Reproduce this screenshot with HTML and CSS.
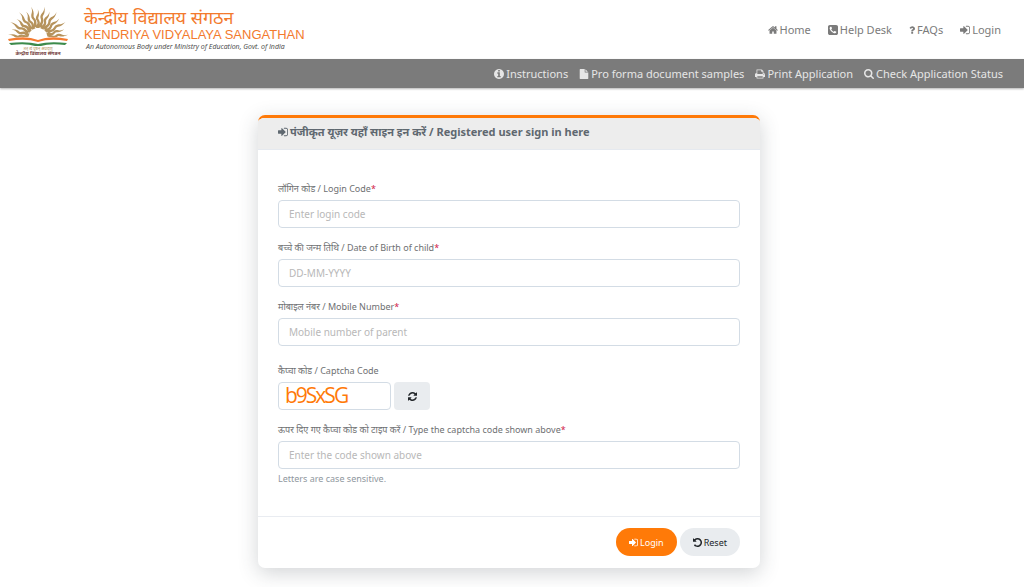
FILE: index.html
```
<!DOCTYPE html>
<html lang="en">
  <head>
    <meta charset="UTF-8" />
    <meta name="viewport" content="width=device-width, initial-scale=1.0" />
    <title>Kendriya Vidyalaya Sangathan - Sign in</title>
    <link rel="stylesheet" href="styles.css">
  </head>
  <body>
    <svg class="sprite" aria-hidden="true">
      <symbol id="sign-in" viewBox="128 128 1536 1536"><path d="M1312 896q0 26-19 45l-544 544q-19 19-45 19t-45-19-19-45v-288h-448q-26 0-45-19t-19-45v-384q0-26 19-45t45-19h448v-288q0-26 19-45t45-19 45 19l544 544q19 19 19 45zm352-352v704q0 119-84.500 203.500t-203.500 84.500h-320q-13 0-22.500-9.500t-9.500-22.500q0-4-1-20t-.5-26.500 3-23.500 10-19.500 20.500-6.500h320q66 0 113-47t47-113v-704q0-66-47-113t-113-47h-312l-11.500-1-11.500-3-8-5.500-7-9-2-13.500q0-4-1-20t-.5-26.500 3-23.500 10-19.500 20.500-6.500h320q119 0 203.500 84.500t84.500 203.500z"/></symbol>
    </svg>

    <header class="site-header">
      <a class="brand" href="#">
        <svg class="emblem" viewBox="0 0 64 52" role="img" aria-label="Kendriya Vidyalaya Sangathan emblem">
          <defs>
            <path id="ray" d="M-1.800 -11C-2.500 -14 -.2 -15 -.6 -17.500C-1 -20 -2.600 -20 -2 -23C-1.500 -26 .6 -26 -.2 -32C1.200 -28 1.400 -26 .4 -23C-.4 -21 1.600 -20 1.800 -17.500C2 -15 .8 -14 1.800 -11Z"/>
          </defs>
          <g class="rays" transform="translate(32 34)">
            <use href="#ray" transform="rotate(-84) scale(1 .94)"/>
            <use href="#ray" transform="rotate(-72) scale(1 .86)"/>
            <use href="#ray" transform="rotate(-60)"/>
            <use href="#ray" transform="rotate(-48) scale(1 .9)"/>
            <use href="#ray" transform="rotate(-36)"/>
            <use href="#ray" transform="rotate(-24) scale(1 .9)"/>
            <use href="#ray" transform="rotate(-12)"/>
            <use href="#ray" transform="scale(1 .9)"/>
            <use href="#ray" transform="rotate(12)"/>
            <use href="#ray" transform="rotate(24) scale(1 .9)"/>
            <use href="#ray" transform="rotate(36)"/>
            <use href="#ray" transform="rotate(48) scale(1 .9)"/>
            <use href="#ray" transform="rotate(60)"/>
            <use href="#ray" transform="rotate(72) scale(1 .86)"/>
            <use href="#ray" transform="rotate(84) scale(1 .94)"/>
          </g>
          <path fill="#fff" d="M3 35Q20 31 32 35Q44 31 61 35V41H3Z"/>
          <path fill="#f47b30" d="M2 35Q20 31 32 36Q44 31 62 35L61 37Q44 34 32 38Q20 34 3 37Z"/>
          <path fill="#3c8a4b" d="M3 39Q21 37 32 40Q43 37 61 39L59 41Q44 39 35 42H29Q20 39 5 41Z"/>
          <text class="emblem-motto" x="32" y="46">तत् त्वं पूषन् अपावृणु</text>
          <text class="emblem-name" x="32" y="51">केन्द्रीय विद्यालय संगठन</text>
        </svg>
        <span class="brand-text">
          <span class="brand-hindi" lang="hi">केन्द्रीय विद्यालय संगठन</span>
          <span class="brand-name">KENDRIYA VIDYALAYA SANGATHAN</span>
          <span class="brand-tagline">An Autonomous Body under Ministry of Education, Govt. of India</span>
        </span>
      </a>
      <nav class="top-nav" aria-label="Main">
        <a href="#"><svg class="icon" viewBox="64 128 1664 1536"><path d="M1472 992v480q0 26-19 45t-45 19h-384v-384h-256v384h-384q-26 0-45-19t-19-45v-480q0-1 .5-3t.5-3l575-474 575 474q1 2 1 6zm223-69l-62 74q-8 9-21 11h-3q-13 0-21-7l-692-577-692 577q-12 8-24 7-13-2-21-11l-62-74q-8-10-7-23.500t11-21.500l719-599q32-26 76-26t76 26l244 204v-195q0-14 9-23t23-9h192q14 0 23 9t9 23v408l219 182q10 8 11 21.500t-7 23.500z"/></svg>Home</a>
        <a href="#"><svg class="icon" viewBox="128 128 1536 1536"><path d="M1408 1193q0-11-2-16t-18-16.500-40.500-25-47.500-26.500-45.500-25-28.500-15q-5-3-19-13t-25-15-21-5q-15 0-36.500 20.500t-39.500 45-38.500 45-33.500 20.500q-7 0-16.500-3.500t-15.500-6.500-17-9.500-14-8.500q-99-55-170-126.500t-127-170.500q-2-3-8.500-14t-9.500-17-6.500-15.500-3.500-16.500q0-13 20.500-33.500t45-38.500 45-39.500 20.500-36.500q0-10-5-21t-15-25-13-19q-3-6-15-28.500t-25-45.500-26.500-47.500-25-40.500-16.500-18-16-2q-48 0-101 22-46 21-80 94.500t-34 130.500q0 16 2.500 34t5 30.500 9 33 10 29.500 12.500 33 11 30q60 164 216.500 320.500t320.500 216.500q6 2 30 11t33 12.500 29.500 10 33 9 30.500 5 34 2.500q57 0 130.500-34t94.500-80q22-53 22-101zm256-777v960q0 119-84.500 203.500t-203.500 84.500h-960q-119 0-203.500-84.500t-84.500-203.500v-960q0-119 84.500-203.500t203.500-84.500h960q119 0 203.500 84.500t84.500 203.500z"/></svg>Help Desk</a>
        <a href="#"><svg class="icon icon-narrow" viewBox="384 192 1024 1408"><path d="M1088 1256v240q0 16-12 28t-28 12h-240q-16 0-28-12t-12-28v-240q0-16 12-28t28-12h240q16 0 28 12t12 28zm316-600q0 54-15.500 101t-35 76.500-55 59.500-57.500 43.500-61 35.500q-41 23-68.500 65t-27.500 67q0 17-12 32.500t-28 15.500h-240q-15 0-25.500-18.500t-10.500-37.500v-45q0-83 65-156.500t143-108.500q59-27 84-56t25-76q0-42-46.500-74t-107.500-32q-65 0-108 29-35 25-107 115-13 16-31 16-12 0-25-8l-164-125q-13-10-15.500-25t5.500-28q160-266 464-266 80 0 161 31t146 83 106 127.500 41 158.500z"/></svg>FAQs</a>
        <a href="#"><svg class="icon"><use href="#sign-in"/></svg>Login</a>
      </nav>
    </header>

    <nav class="sub-nav" aria-label="Application">
      <a href="#"><svg class="icon" viewBox="128 128 1536 1536"><path d="M1152 1376v-160q0-14-9-23t-23-9h-96v-512q0-14-9-23t-23-9h-320q-14 0-23 9t-9 23v160q0 14 9 23t23 9h96v320h-96q-14 0-23 9t-9 23v160q0 14 9 23t23 9h448q14 0 23-9t9-23zm-128-896v-160q0-14-9-23t-23-9h-192q-14 0-23 9t-9 23v160q0 14 9 23t23 9h192q14 0 23-9t9-23zm640 416q0 209-103 385.500t-279.500 279.500-385.500 103-385.500-103-279.500-279.500-103-385.500 103-385.500 279.500-279.500 385.500-103 385.500 103 279.500 279.500 103 385.500z"/></svg>Instructions</a>
      <a href="#"><svg class="icon" viewBox="128 0 1536 1792"><path d="M1152 512v-472q22 14 36 28l408 408q14 14 28 36h-472zm-128 32q0 40 28 68t68 28h544v1056q0 40-28 68t-68 28h-1344q-40 0-68-28t-28-68v-1600q0-40 28-68t68-28h800v544z"/></svg>Pro forma document samples</a>
      <a href="#"><svg class="icon" viewBox="64 128 1664 1536"><path d="M448 1536h896v-256h-896v256zm0-640h896v-384h-160q-40 0-68-28t-28-68v-160h-640v640zm1152 64q0-26-19-45t-45-19-45 19-19 45 19 45 45 19 45-19 19-45zm128 0v416q0 13-9.500 22.500t-22.500 9.500h-224v160q0 40-28 68t-68 28h-960q-40 0-68-28t-28-68v-160h-224q-13 0-22.500-9.500t-9.500-22.500v-416q0-79 56.500-135.500t135.500-56.500h64v-544q0-40 28-68t68-28h672q40 0 88 20t76 48l152 152q28 28 48 76t20 88v256h64q79 0 135.500 56.500t56.500 135.500z"/></svg>Print Application</a>
      <a href="#"><svg class="icon" viewBox="64 128 1664 1664"><path d="M1216 832q0-185-131.500-316.500t-316.500-131.500-316.500 131.500-131.500 316.500 131.500 316.500 316.500 131.500 316.500-131.500 131.500-316.500zm512 832q0 52-38 90t-90 38q-54 0-90-38l-343-342q-179 124-399 124-143 0-273.500-55.500t-225-150-150-225-55.500-273.500 55.500-273.500 150-225 225-150 273.500-55.500 273.500 55.500 225 150 150 225 55.500 273.500q0 220-124 399l343 343q37 37 37 90z"/></svg>Check Application Status</a>
    </nav>

    <main>
      <form class="card">
        <h1 class="card-header"><svg class="icon"><use href="#sign-in"/></svg>पंजीकृत यूज़र यहाँ साइन इन करें / Registered user sign in here</h1>
        <div class="card-body">
          <div class="field">
            <label for="login-code">लॉगिन कोड / Login Code<span class="required">*</span></label>
            <input type="text" id="login-code" placeholder="Enter login code" />
          </div>
          <div class="field">
            <label for="dob">बच्चे की जन्म तिथि / Date of Birth of child<span class="required">*</span></label>
            <input type="text" id="dob" placeholder="DD-MM-YYYY" />
          </div>
          <div class="field">
            <label for="mobile">मोबाइल नंबर / Mobile Number<span class="required">*</span></label>
            <input type="tel" id="mobile" placeholder="Mobile number of parent" />
          </div>
          <div class="field field-captcha">
            <span class="label">कैप्चा कोड / Captcha Code</span>
            <div class="captcha-row">
              <span class="captcha-code">b9SxSG</span>
              <button type="button" class="btn-refresh" aria-label="Refresh captcha">
                <svg class="icon" viewBox="128 128 1536 1536"><path d="M1639 1056q0 5-1 7-64 268-268 434.500t-478 166.500q-146 0-282.500-55t-243.500-157l-129 129q-19 19-45 19t-45-19-19-45v-448q0-26 19-45t45-19h448q26 0 45 19t19 45-19 45l-137 137q71 66 161 102t187 36q134 0 250-65t186-179q11-17 53-117 8-23 30-23h192q13 0 22.500 9.500t9.500 22.500zm25-800v448q0 26-19 45t-45 19h-448q-26 0-45-19t-19-45 19-45l138-138q-148-137-349-137-134 0-250 65t-186 179q-11 17-53 117-8 23-30 23h-199q-13 0-22.500-9.500t-9.500-22.500v-7q65-268 270-434.500t480-166.500q146 0 284 55.500t245 156.500l130-129q19-19 45-19t45 19 19 45z"/></svg>
              </button>
            </div>
          </div>
          <div class="field">
            <label for="captcha">ऊपर दिए गए कैप्चा कोड को टाइप करें / Type the captcha code shown above<span class="required">*</span></label>
            <input type="text" id="captcha" placeholder="Enter the code shown above" aria-describedby="captcha-help" />
            <small id="captcha-help">Letters are case sensitive.</small>
          </div>
        </div>
        <div class="card-footer">
          <button type="submit" class="btn btn-primary"><svg class="icon"><use href="#sign-in"/></svg>Login</button>
          <button type="reset" class="btn"><svg class="icon" viewBox="128 128 1536 1536"><path d="M1664 896q0 156-61 298t-164 245-245 164-298 61q-172 0-327-72.500t-264-204.500q-7-10-6.500-22.500t8.500-20.500l137-138q10-9 25-9 16 2 23 12 73 95 179 147t225 52q104 0 198.500-40.500t163.500-109.500 109.500-163.500 40.500-198.500-40.500-198.500-109.500-163.500-163.500-109.500-198.500-40.500q-98 0-188 35.500t-160 101.500l137 138q31 30 14 69-17 40-59 40h-448q-26 0-45-19t-19-45v-448q0-42 40-59 39-17 69 14l130 129q107-101 244.500-156.500t284.500-55.500q156 0 298 61t245 164 164 245 61 298z"/></svg>Reset</button>
        </div>
      </form>
    </main>
  </body>
</html>
```

FILE: styles.css
```
:root {
  --orange: #ff7a08;
  --text: #6e7072;
  --border: #d3dce5;
  --btn-bg: #e9ecef;
}

* {
  box-sizing: border-box;
}

body {
  margin: 0;
  font-family: "Noto Sans", sans-serif;
  font-size: 11px;
  color: var(--text);
  background: #fff;
}

a {
  color: inherit;
  text-decoration: none;
}

.sprite {
  display: none;
}

.icon {
  width: 10px;
  height: 10px;
  flex: none;
  fill: currentColor;
}

.icon-narrow {
  width: 6px;
}

/* Header */
.site-header {
  display: flex;
  justify-content: space-between;
  align-items: center;
  height: 59px;
  padding: 0 23px 0 6px;
}

.brand {
  display: flex;
  align-items: center;
  gap: 14px;
}

.emblem {
  width: 64px;
  height: 52px;

  .rays {
    fill: #b6935c;
  }

  text {
    font-size: 5px;
    font-weight: bold;
    text-anchor: middle;
    fill: #713a3a;
  }

  .emblem-motto {
    font-size: 4px;
    font-weight: normal;
    fill: #b6935c;
  }
}

.brand-text {
  display: flex;
  flex-direction: column;
}

.brand-hindi {
  font-size: 18px;
  line-height: 20px;
  color: #f37a2d;
}

.brand-name {
  font-family: "Liberation Sans", Arial, sans-serif;
  font-size: 13px;
  line-height: 15px;
  color: #f37a2d;
}

.brand-tagline {
  padding-left: 2px;
  font-family: "Open Sans", sans-serif;
  font-size: 7px;
  font-style: italic;
  line-height: 10px;
  color: #444;
}

.top-nav,
.sub-nav {
  display: flex;

  a {
    display: flex;
    align-items: center;
    gap: 2px;
  }
}

.top-nav {
  gap: 17px;
  color: #7b7b7b;
}

.sub-nav {
  justify-content: flex-end;
  align-items: center;
  gap: 11px;
  height: 29px;
  padding: 0 21px;
  color: #e6e6e6;
  background: #7b7b7b;
  box-shadow: 0 1px 2px rgba(0, 0, 0, 0.3);
}

/* Sign in card */
main {
  padding: 27px 6px 19px 0;
}

.card {
  width: 50%;
  max-width: 502px;
  min-width: 320px;
  margin: 0 auto;
  overflow: hidden;
  background: #fff;
  border-top: 3px solid var(--orange);
  border-radius: 7px;
  box-shadow: 0 5px 20px rgba(50, 60, 70, 0.22);
}

.card-header {
  display: flex;
  align-items: center;
  gap: 2px;
  height: 32px;
  margin: 0;
  padding: 0 20px 4px;
  font-size: 11px;
  font-weight: bold;
  color: #5f6870;
  background: #ededed;
  border-bottom: 1px solid #e5e9ef;
}

.card-body {
  display: flex;
  flex-direction: column;
  gap: 12px;
  padding: 31px 20px;
}

.field {
  display: flex;
  flex-direction: column;
  gap: 4px;

  label,
  .label {
    font-size: 9px;
    line-height: 15px;
  }

  input {
    width: 100%;
    height: 28px;
    padding: 0 10px;
    font-family: inherit;
    font-size: 10px;
    color: #495057;
    background: #fff;
    border: 1px solid var(--border);
    border-radius: 4px;

    &::placeholder {
      color: #b8b8b8;
      opacity: 1;
    }
  }

  small {
    font-size: 9px;
    line-height: 12px;
    color: #8f979e;
  }
}

.field-captcha {
  padding-top: 5px;
}

.required {
  color: #d0224a;
}

.captcha-row {
  display: flex;
  gap: 3px;
}

/* glyphs run into each other on purpose */
.captcha-code {
  width: 113px;
  height: 28px;
  padding-left: 6px;
  font-family: "Open Sans", sans-serif;
  font-size: 21px;
  line-height: 24px;
  letter-spacing: -2px;
  color: var(--orange);
  border: 1px solid var(--border);
  border-radius: 4px;
}

.btn-refresh {
  display: flex;
  justify-content: center;
  align-items: center;
  width: 36px;
  padding: 0;
  color: #212529;
  background: var(--btn-bg);
  border: 0;
  border-radius: 4px;

  .icon {
    width: 9px;
    height: 9px;
  }
}

.card-footer {
  display: flex;
  justify-content: flex-end;
  gap: 3px;
  padding: 11px 20px 12px;
  border-top: 1px solid #e9ecf1;
}

.btn {
  display: flex;
  align-items: center;
  gap: 2px;
  height: 28px;
  padding: 0 13px;
  font-family: inherit;
  font-size: 9px;
  color: #212529;
  background: var(--btn-bg);
  border: 0;
  border-radius: 14px;

  .icon {
    width: 9px;
    height: 9px;
  }
}

.btn-primary {
  color: #fff;
  background: var(--orange);
}
```
